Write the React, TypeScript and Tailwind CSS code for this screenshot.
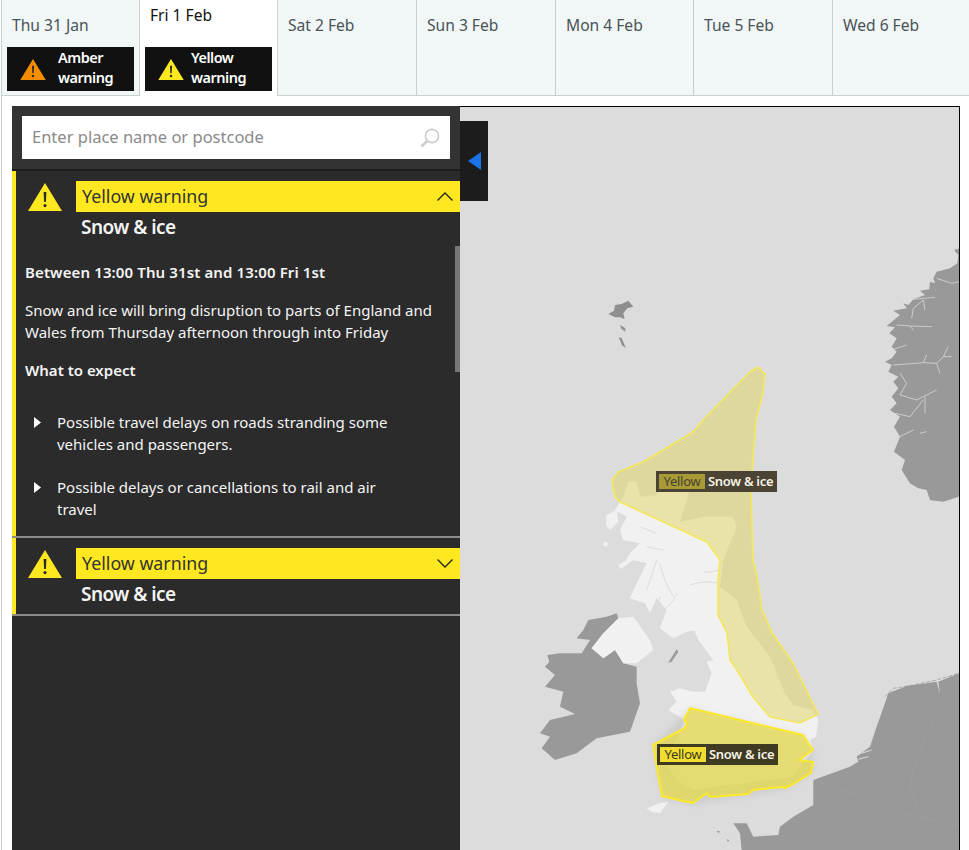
// ── Data ─────────────────────────────────────────────────────────────

const plainDays = ['Sat 2 Feb', 'Sun 3 Feb', 'Mon 4 Feb', 'Tue 5 Feb', 'Wed 6 Feb'];

// ── Small drawings ───────────────────────────────────────────────────

function WarnTriangle({ color, className }: { color: string; className: string }) {
  return (
    <svg viewBox="0 0 34 28" className={className}>
      <path d="M17 0 L34 28 L0 28 Z" fill={color} />
      <path d="M15.6 9 h2.8 l-.5 10 h-1.8 Z" fill="#2b2b2b" />
      <circle cx="17" cy="22.6" r="1.6" fill="#2b2b2b" />
    </svg>
  );
}

function DayBadge({ level, color, textClass }: { level: string; color: string; textClass: string }) {
  return (
    <div className="flex h-[44px] w-[127px] items-center bg-[#111111] pl-[13px] text-white">
      <WarnTriangle color={color} className="h-[21px] w-[26px] shrink-0" />
      <div className={`${textClass} -mt-[4px] text-[14.5px] leading-[20px] font-semibold tracking-[-0.5px]`}>
        {level}
        <br />
        warning
      </div>
    </div>
  );
}

function WarningHead({ open }: { open: boolean }) {
  return (
    <div className="flex pt-[10px]">
      <WarnTriangle color="#ffe81f" className="mt-[2px] ml-[12px] h-[28px] w-[34px] shrink-0" />
      <div className="ml-[14px] flex-1">
        <div className="flex h-[31px] items-center justify-between bg-[#ffe81f] pr-[7px] pl-[6px] text-[17.8px] text-[#333333]">
          <span className="-mt-px">Yellow warning</span>
          <svg viewBox="0 0 16 9" className="h-[9px] w-[16px]" fill="none" stroke="#222222" strokeWidth="1.3">
            <path d={open ? 'M0.5 8.5 L8 1 L15.5 8.5' : 'M0.5 0.5 L8 8 L15.5 0.5'} />
          </svg>
        </div>
        <div className="mt-[3px] pl-[5px] text-[19px] leading-[24px] font-semibold tracking-[-0.5px] text-[#f4f4f4]">
          Snow &amp; ice
        </div>
      </div>
    </div>
  );
}

function Bullet({ children }: { children: React.ReactNode }) {
  return (
    <div className="flex">
      <svg viewBox="0 0 7 11" className="mt-[6px] ml-[9px] h-[11px] w-[7px] shrink-0">
        <path d="M0 0 L7 5.5 L0 11 Z" fill="#ffffff" />
      </svg>
      <p className="ml-[16px] w-[345px]">{children}</p>
    </div>
  );
}

// ── Map ──────────────────────────────────────────────────────────────

function MapDrawing() {
  return (
    <svg viewBox="460 107 499 743" className="absolute inset-0 h-full w-full">
      <defs>
        <filter id="soft" x="-10%" y="-10%" width="120%" height="120%">
          <feGaussianBlur stdDeviation="3" />
        </filter>
      </defs>

      {/* land, traced from the 3x crop of the lower map */}
      <g transform="translate(460 560) scale(0.3333)">
        <path
          fill="#f1f1f1"
          d="M465,-150 L490,-190 L505,-235 L530,-235 L540,-190 L590,-195 L600,-210 L690,-210 L660,-115 L730,-130 L820,-130 L830,-100 L790,0 L780,80 L830,120 L860,200 L930,290 L975,400 L1000,435 L1060,450 L1075,480 L1068,530 L1050,540 L1060,570 L1000,650 L850,670 L760,680 L700,690 L650,660 L620,610 L675,480 L625,450 L650,425 L630,395 L660,385 L700,395 L735,395 L755,340 L740,305 L760,300 L715,240 L700,205 L735,205 L680,215 L640,235 L600,205 L620,150 L590,115 L570,160 L555,130 L510,115 L530,70 L560,10 L520,0 L480,30 L510,-20 L540,-50 L490,-60 L480,-90 L500,-130 Z"
        />
        <path fill="#f1f1f1" d="M440,-135 L470,-150 L475,-115 L450,-90 L438,-105 Z" />
        <path fill="#f1f1f1" d="M432,-55 L445,-52 L440,-40 L430,-42 Z" />
        <path fill="#f1f1f1" d="M475,15 L510,-5 L500,10 L480,25 Z" />
        <path fill="#f1f1f1" d="M560,745 L600,730 L625,725 L600,760 L575,755 Z" />
        <g fill="none" stroke="#dcdcdc" strokeWidth="3">
          <path d="M775,70 Q730,60 690,75" />
          <path d="M775,30 Q750,40 730,35" />
          <path d="M640,110 Q610,60 600,10" />
          <path d="M590,0 Q575,50 560,90" />
          <path d="M590,150 L600,110" />
          <path d="M540,-100 L590,-80" />
          <path d="M560,-40 L610,-30" />
          <path d="M610,150 Q640,130 650,100" />
        </g>

        {/* Ireland */}
        <path
          fill="#999999"
          d="M470,160 L440,170 L385,180 L370,210 L350,235 L390,240 L365,280 L300,280 L262,285 L268,305 L255,320 L285,345 L255,380 L310,395 L300,440 L345,462 L270,480 L240,520 L270,530 L245,565 L285,600 L350,580 L410,535 L510,515 L540,430 L530,370 L530,320 L490,310 L465,270 L430,295 L395,265 L430,220 L475,175 Z"
        />
        <path
          fill="#f1f1f1"
          d="M475,175 L520,170 L570,240 L580,270 L530,310 L490,310 L465,270 L430,295 L395,265 L430,220 Z"
        />
        <path fill="#999999" d="M650,268 L625,308 L635,305 L655,275 Z" />

        {/* France, Benelux */}
        <path
          fill="#999999"
          d="M845,870 L840,820 L820,790 L860,790 L880,830 L955,825 L960,800 L1000,770 L1060,735 L1060,660 L1170,620 L1195,605 L1190,590 L1230,560 L1250,500 L1275,430 L1285,400 L1340,378 L1430,365 L1440,400 L1435,365 L1497,340 L1497,870 Z"
        />
        <path fill="#999999" d="M770,812 l10,2 l-4,6 Z M800,838 l8,2 l-4,6 Z" />
        <path fill="none" stroke="#8f8f8f" strokeWidth="2" strokeDasharray="12 5" d="M1275,410 L1300,385 L1360,375 L1430,360 L1497,340" />
        <g fill="none" stroke="#dcdcdc" strokeWidth="3">
          <path d="M1195,598 L1225,590" />
          <path d="M1205,580 L1235,570" />
        </g>
        <g fill="none" stroke="#adadad" strokeWidth="1.5" strokeDasharray="3 3">
          <path d="M1100,680 Q1200,700 1230,730 Q1300,760 1380,770 L1497,800" />
          <path d="M1420,480 Q1360,600 1350,680 Q1370,760 1420,840" />
        </g>
      </g>

      {/* Norway */}
      <g transform="translate(880 240) scale(0.3333)">
        <path
          fill="#999999"
          d="M238,25 L222,30 L235,45 L232,70 L210,85 L170,95 L160,115 L165,130 L150,125 L148,148 L120,152 L135,165 L100,178 L85,195 L70,190 L80,205 L40,212 L60,225 L20,258 L45,262 L28,280 L50,295 L35,320 L50,335 L35,355 L15,365 L35,375 L25,395 L55,410 L40,425 L55,445 L35,470 L50,490 L30,510 L60,530 L42,560 L60,590 L42,635 L75,660 L65,690 L90,730 L115,745 L140,750 L150,780 L190,785 L238,770 Z"
        />
        <g fill="none" stroke="#d6d6d6" strokeWidth="2.5">
          <path d="M100,178 L130,175 L165,172 M130,180 L100,205 L95,235 M130,180 L135,210" />
          <path d="M50,255 L90,258 L155,260 M90,258 L100,270" />
          <path d="M35,330 L80,315" />
          <path d="M40,375 L130,368 L170,370 L180,400 M130,368 L140,345 M170,370 L190,350 L215,350 M190,350 L205,320" />
          <path d="M170,115 L215,130 L238,125" />
          <path d="M60,400 L80,430 L60,465 L110,480 L170,450 M135,470 L135,520" />
          <path d="M45,520 L90,530 L130,480" />
          <path d="M60,590 L100,570 M120,580 L140,575" />
        </g>
      </g>

      {/* Faroes */}
      <g transform="translate(590 280) scale(0.3333)" fill="#8f8f8f">
        <path d="M55,102 L72,92 L75,75 L95,72 L115,62 L130,80 L112,85 L100,100 L104,118 L90,112 L75,112 Z" />
        <path d="M90,135 L106,145 L106,155 L94,146 Z" />
        <path d="M86,172 L95,175 L108,205 L96,196 Z" />
      </g>

      {/* warning areas */}
      <path
        filter="url(#soft)"
        fill="#808080"
        opacity="0.15"
        d="M690,708 L803,735 L813,750 L813,773 L785,790 L693,805 L662,798 L653,745 Z"
      />
      <path
        fill="#e0d35c"
        fillOpacity="0.48"
        stroke="#f4e85a"
        strokeWidth="1.6"
        strokeLinejoin="round"
        d="M758,367 L765,374 L762,397 L756,420 L753,457 L751,493 L753,560 L757,577 L762,610 L772,633 L793,663 L818,714 L800,723 L770,717 L753,697 L737,670 L730,660 L727,633 L718,615 L718,580 L720,560 L718,557 L707,542 L620,502 L615,497 L612,480 L618,472 L643,462 L693,432 L705,418 L750,372 Z"
      />
      <path
        fill="#e8d94a"
        fillOpacity="0.72"
        stroke="#fbe92a"
        strokeWidth="2"
        strokeLinejoin="round"
        d="M690,708 L803,735 L813,750 L799,760 L813,762 L811,773 L795,783 L785,788 L782,787 L753,790 L748,794 L710,797 L707,793 L693,803 L683,801 L662,796 L653,745 L685,728 L687,723 L684,720 Z"
      />
    </svg>
  );
}

function MapLabel({ className, levelClass }: { className: string; levelClass: string }) {
  return (
    <div className={`${className} absolute flex h-[21px] w-[121px] items-center text-[13px] font-semibold tracking-[-0.3px]`}>
      <span className={`${levelClass} ml-[3px] flex h-[15px] w-[46px] items-center justify-center font-normal`}>Yellow</span>
      <span className="ml-[3px] text-[#f5f1e4]">Snow &amp; ice</span>
    </div>
  );
}

// ── Page ─────────────────────────────────────────────────────────────

export default function App() {
  return (
    <div className="h-[850px] w-[969px] overflow-hidden bg-white font-['Noto_Sans',sans-serif]">
      {/* ── Day tabs ─────────────────────────────────────────────── */}
      <div className="flex h-[96px] pl-px">
        <div className="flex w-[139px] flex-col border-r border-b border-l border-[#c8cfd1] bg-[#f1f6f7] pl-[5px] text-[15.6px] text-[#4a5355]">
          <div className="pt-[15px] pl-[5px] leading-[20px]">Thu 31 Jan</div>
          <div className="mt-[12px]">
            <DayBadge level="Amber" color="#f68d00" textClass="ml-[12px]" />
          </div>
        </div>
        <div className="flex w-[138px] flex-col border-r border-[#c8cfd1] bg-white pl-[5px] text-[15.6px] text-[#111111]">
          <div className="pt-[5px] pl-[5px] leading-[20px]">Fri 1 Feb</div>
          <div className="mt-[22px]">
            <DayBadge level="Yellow" color="#ffe81f" textClass="ml-[7px]" />
          </div>
        </div>
        {plainDays.map((day, i) => (
          <div
            key={day}
            className={`${i === 4 ? 'flex-1' : i === 2 ? 'w-[138px] border-r' : 'w-[139px] border-r'} border-b border-[#c8cfd1] bg-[#f1f6f7] pt-[15px] pl-[10px] text-[15.6px] leading-[20px] text-[#4a5355]`}
          >
            {day}
          </div>
        ))}
      </div>

      {/* ── Main area ────────────────────────────────────────────── */}
      <div className="ml-px h-[754px] border-l border-[#c8cfd1] pt-[10px] pr-[9px] pl-[10px]">
        <div className="flex h-full">
          <aside className="relative w-[448px] shrink-0 bg-[#2b2b2b]">
            <div className="h-[65px] border-b-2 border-[#1c1c1c] bg-[#333333] p-[10px]">
              <div className="flex h-[43px] items-center justify-between bg-white pr-[10px] pl-[10px] text-[16.5px] text-[#8a8a8a]">
                <span>Enter place name or postcode</span>
                <svg viewBox="0 0 20 20" className="h-[20px] w-[20px]" fill="none" stroke="#cccccc">
                  <circle cx="12" cy="8" r="6.6" strokeWidth="1.6" />
                  <path d="M7.2 12.8 L1.5 18.5" strokeWidth="2.6" />
                </svg>
              </div>
            </div>

            <section className="h-[365px] border-l-4 border-[#ffe81f] text-[15px] leading-[22px] text-[#f4f4f4]">
              <WarningHead open />
              <div className="pt-[22px] pl-[9px]">
                <p className="font-semibold tracking-[0.12px]">Between 13:00 Thu 31st and 13:00 Fri 1st</p>
                <p className="mt-[16px] w-[420px]">
                  Snow and ice will bring disruption to parts of England and Wales from Thursday afternoon through into Friday
                </p>
                <p className="mt-[16px] font-semibold">What to expect</p>
                <div className="mt-[30px] space-y-[21px]">
                  <Bullet>Possible travel delays on roads stranding some vehicles and passengers.</Bullet>
                  <Bullet>Possible delays or cancellations to rail and air travel</Bullet>
                </div>
              </div>
            </section>
            <div className="h-[2px] bg-[#8c8c8c]" />
            <section className="h-[76px] border-l-4 border-[#ffe81f]">
              <WarningHead open={false} />
            </section>
            <div className="h-[2px] bg-[#8c8c8c]" />

            {/* scrollbar thumb lies over the panel */}
            <div className="absolute top-[140px] right-0 h-[126px] w-[5px] bg-[#777777]" />
          </aside>

          <div className="relative flex-1 border-t border-r border-black bg-[#dcdcdc]">
            <MapDrawing />
            <div className="absolute top-[14px] left-0 flex h-[80px] w-[28px] items-center justify-center bg-[#1c1c1c]">
              <svg viewBox="0 0 13 18" className="h-[18px] w-[13px]">
                <path d="M13 0 V18 L0 9 Z" fill="#1a73e8" />
              </svg>
            </div>
            <MapLabel className="top-[364px] left-[196px] bg-[#4b4334]" levelClass="bg-[#a89a35] text-[#4b4334]" />
            <MapLabel className="top-[637px] left-[197px] bg-[#3f3a22]" levelClass="bg-[#f0dd30] text-[#3f3a22]" />
          </div>
        </div>
      </div>
    </div>
  );
}
